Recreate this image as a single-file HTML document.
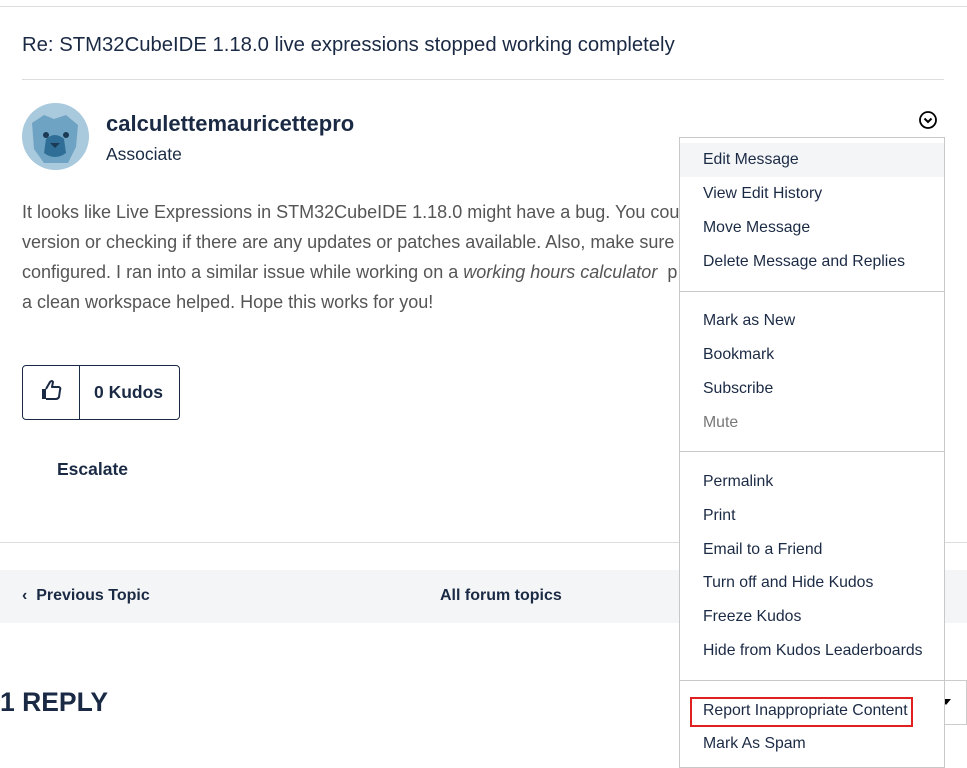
<!DOCTYPE html>
<html><head><style>
body{margin:0;width:967px;height:768px;overflow:hidden;background:#fff;font-family:"Liberation Sans",sans-serif;position:relative;color:#1b2a44}
.a{position:absolute}
.p{font-size:18px;color:#555;line-height:30px}
.mi{position:absolute;left:0;width:264px;height:34px;line-height:34px;padding-left:23px;box-sizing:border-box;font-size:15.8px;color:#1b2a44;white-space:nowrap}
.sep{position:absolute;left:0;width:264px;height:1px;background:#c8c8c8}
</style></head><body>
<div class="a" style="left:0;top:6px;width:967px;height:1px;background:#ddd"></div>
<div class="a" style="left:22px;top:34px;font-size:20.3px;color:#1b2a44">Re: STM32CubeIDE 1.18.0 live expressions stopped working completely</div>
<div class="a" style="left:22px;top:79px;width:922px;height:1px;background:#ddd"></div>
<svg class="a" style="left:22px;top:103px" width="67" height="67" viewBox="0 0 67 67"><circle cx="33.5" cy="33.5" r="33.5" fill="#a9c9dd"/><path d="M10 20 L22 12 L32 16 L44 12 L56 22 L54 44 L46 60 L22 60 L12 46Z" fill="#6fa3c3"/><path d="M24 36 Q33 28 42 36 L44 50 Q33 58 22 50Z" fill="#2f6f97"/><circle cx="24" cy="32" r="3" fill="#1b3a55"/><circle cx="44" cy="32" r="3" fill="#1b3a55"/><path d="M28 40 h10 l-5 5z" fill="#1b3a55"/></svg>
<div class="a" style="left:106px;top:111px;font-size:22px;font-weight:bold">calculettemauricettepro</div>
<div class="a" style="left:106px;top:144px;font-size:17.5px">Associate</div>
<svg class="a" style="left:918px;top:110px" width="20" height="20" viewBox="0 0 20 20"><circle cx="10" cy="10" r="8" fill="none" stroke="#000" stroke-width="1.8"/><path d="M6.5 8.5 L10 12 L13.5 8.5" fill="none" stroke="#000" stroke-width="2"/></svg>
<div class="a p" style="left:22px;top:197px;width:660px;white-space:nowrap;overflow:hidden">It looks like Live Expressions in STM32CubeIDE 1.18.0 might have a bug. You cou<br>version or checking if there are any updates or patches available. Also, make sure<br>configured. I ran into a similar issue while working on a <i>working hours calculator</i>&nbsp; p<br>a clean workspace helped. Hope this works for you!</div>
<div class="a" style="left:22px;top:365px;width:156px;height:53px;border:1px solid #1b2a44;border-radius:4px"></div>
<div class="a" style="left:79px;top:366px;width:1px;height:53px;background:#1b2a44"></div>
<svg class="a" style="left:40px;top:378px" width="24" height="24" viewBox="0 0 24 24"><path d="M2 11h4v10H2z" fill="#1b2a44"/><path d="M6 11 L10 4 Q12 2 13 4 L12 9 H19 Q21 10 20 12 L19 19 Q18 21 16 21 H6" fill="none" stroke="#1b2a44" stroke-width="2" stroke-linejoin="round"/></svg>
<div class="a" style="left:94px;top:382px;font-size:17.5px;font-weight:bold">0 Kudos</div>
<div class="a" style="left:57px;top:459px;font-size:17.5px;font-weight:bold">Escalate</div>
<div class="a" style="left:0;top:542px;width:967px;height:1px;background:#ddd"></div>
<div class="a" style="left:0;top:570px;width:967px;height:53px;background:#f4f5f6"></div>
<div class="a" style="left:22px;top:587px;font-size:16px;font-weight:bold">&#8249;&nbsp; Previous Topic</div>
<div class="a" style="left:440px;top:587px;font-size:16px;font-weight:bold">All forum topics</div>
<div class="a" style="left:0;top:687px;font-size:26.5px;font-weight:bold">1 REPLY</div>
<div class="a" style="left:900px;top:680px;width:65px;height:43px;border:1px solid #ccc;background:#fff"></div>
<div class="a" style="left:941px;top:699px;width:0;height:0;border-left:5px solid transparent;border-right:5px solid transparent;border-top:6px solid #000"></div>
<div class="a" style="left:679px;top:137px;width:264px;height:629px;border:1px solid #c8c8c8;background:#fff;box-sizing:content-box">
<div class="mi" style="top:5px;background:#f4f5f7">Edit Message</div>
<div class="mi" style="top:39px">View Edit History</div>
<div class="mi" style="top:73px">Move Message</div>
<div class="mi" style="top:107px">Delete Message and Replies</div>
<div class="sep" style="top:153px"></div>
<div class="mi" style="top:166px">Mark as New</div>
<div class="mi" style="top:200px">Bookmark</div>
<div class="mi" style="top:234px">Subscribe</div>
<div class="mi" style="top:268px;color:#777">Mute</div>
<div class="sep" style="top:313px"></div>
<div class="mi" style="top:327px">Permalink</div>
<div class="mi" style="top:361px">Print</div>
<div class="mi" style="top:395px">Email to a Friend</div>
<div class="mi" style="top:428px">Turn off and Hide Kudos</div>
<div class="mi" style="top:462px">Freeze Kudos</div>
<div class="mi" style="top:496px">Hide from Kudos Leaderboards</div>
<div class="sep" style="top:542px"></div>
<div class="mi" style="top:556px">Report Inappropriate Content</div>
<div class="a" style="left:10px;top:559px;width:219px;height:26px;border:2px solid #e02020"></div>
<div class="mi" style="top:589px">Mark As Spam</div>
</div>
</body></html>
